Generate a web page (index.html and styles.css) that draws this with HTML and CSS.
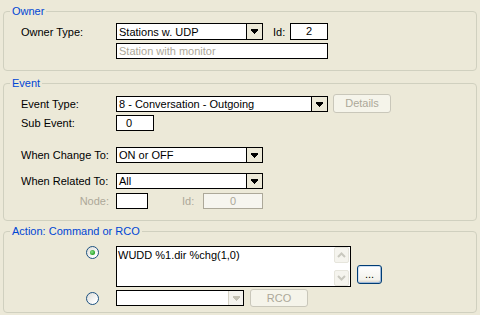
FILE: index.html
```html
<!DOCTYPE html>
<html lang="en">
<head>
    <meta charset="UTF-8">
    <title>Event Action</title>
    <link rel="stylesheet" href="styles.css">
</head>
<body>
    <fieldset class="group owner">
        <legend>Owner</legend>
        <div class="row">
            <span class="lbl">Owner Type:</span>
            <div class="combo tall w147">
                <span class="val">Stations w. UDP</span>
                <span class="arrow"><svg width="7" height="5" viewBox="0 0 7 5"><path d="M0 0h7v2H0z M1 2h5v1H1z M2 3h3v1H2z M3 4h1v1H3z"/></svg></span>
            </div>
            <span class="id-lbl">Id:</span>
            <div class="field tall owner-id">2</div>
        </div>
        <div class="row gap3">
            <span class="lbl"></span>
            <div class="field ghost w212">Station with monitor</div>
        </div>
    </fieldset>

    <fieldset class="group event">
        <legend>Event</legend>
        <div class="row top">
            <span class="lbl lbl-mid">Event Type:</span>
            <div class="combo w212 mt2">
                <span class="val">8 - Conversation - Outgoing</span>
                <span class="arrow"><svg width="7" height="5" viewBox="0 0 7 5"><path d="M0 0h7v2H0z M1 2h5v1H1z M2 3h3v1H2z M3 4h1v1H3z"/></svg></span>
            </div>
            <div class="btn off details">Details</div>
        </div>
        <div class="row gap2">
            <span class="lbl">Sub Event:</span>
            <div class="field sub">0</div>
        </div>
        <div class="row gap16">
            <span class="lbl">When Change To:</span>
            <div class="combo w147">
                <span class="val">ON or OFF</span>
                <span class="arrow"><svg width="7" height="5" viewBox="0 0 7 5"><path d="M0 0h7v2H0z M1 2h5v1H1z M2 3h3v1H2z M3 4h1v1H3z"/></svg></span>
            </div>
        </div>
        <div class="row gap10">
            <span class="lbl">When Related To:</span>
            <div class="combo w147">
                <span class="val">All</span>
                <span class="arrow"><svg width="7" height="5" viewBox="0 0 7 5"><path d="M0 0h7v2H0z M1 2h5v1H1z M2 3h3v1H2z M3 4h1v1H3z"/></svg></span>
            </div>
        </div>
        <div class="row gap4">
            <span class="lbl right dim">Node:</span>
            <div class="field node"></div>
            <span class="id-lbl dim node-id-lbl">Id:</span>
            <div class="field off node-id">0</div>
        </div>
    </fieldset>

    <fieldset class="group action">
        <legend>Action: Command or RCO</legend>
        <div class="row top">
            <span class="lbl"><span class="radio checked"></span></span>
            <div class="memo">
                <div class="memo-text">WUDD %1.dir %chg(1,0)</div>
                <div class="scroll">
                    <span class="sbtn"><svg width="9" height="6" viewBox="0 0 9 6"><path d="M1 5 4.5 1.5 8 5" fill="none" stroke="#c9c8bf" stroke-width="2"/></svg></span>
                    <span class="sbtn"><svg width="9" height="6" viewBox="0 0 9 6"><path d="M1 1 4.5 4.5 8 1" fill="none" stroke="#c9c8bf" stroke-width="2"/></svg></span>
                </div>
            </div>
            <div class="btn dots">...</div>
        </div>
        <div class="row gap2">
            <span class="lbl"><span class="radio"></span></span>
            <div class="combo w128 disabled">
                <span class="val"></span>
                <span class="arrow"><svg width="7" height="5" viewBox="0 0 7 5"><path d="M0 0h7v2H0z M1 2h5v1H1z M2 3h3v1H2z M3 4h1v1H3z" fill="#c4c1b4"/></svg></span>
            </div>
            <div class="btn off rco">RCO</div>
        </div>
    </fieldset>
</body>
</html>
```

FILE: styles.css
```css
body {
    margin: 0;
    padding: 5px 3px 0 3px;
    background: #ece9d8;
    font-family: 'Liberation Sans', Arial, sans-serif;
    font-size: 11px;
    line-height: 14px;
    color: #000;
}

.group {
    margin: 0;
    border: 1px solid #d0d0bf;
    border-radius: 4px;
    padding: 0 0 11px 6px;
    min-width: 0;
}

.group legend {
    padding: 0 2px;
    color: #0046d5;
    line-height: 13px;
}

.owner { padding-top: 5px; }
.event { margin-top: 6px; padding-top: 4px; }
.action { margin-top: 4px; padding-top: 8px; padding-bottom: 5px; }

.row {
    display: flex;
    align-items: center;
    padding-left: 11px;
}

.row.top { align-items: flex-start; }

.gap2 { margin-top: 2px; }
.gap3 { margin-top: 3px; }
.gap4 { margin-top: 4px; }
.gap10 { margin-top: 10px; }
.gap16 { margin-top: 16px; }
.mt2 { margin-top: 2px; }

.lbl {
    width: 95px;
    flex: none;
    display: flex;
    align-items: center;
}

.lbl-mid { height: 19px; }

.lbl.right {
    justify-content: flex-end;
    padding-right: 7px;
    box-sizing: border-box;
}

.dim { color: #aca899; }

/* combo boxes */
.combo {
    display: flex;
    height: 16px;
    border: 1px solid #000;
    background: #fff;
    box-sizing: border-box;
}

.combo.tall, .field.tall { height: 17px; }

.combo .val {
    flex: 1;
    padding-left: 2px;
    white-space: nowrap;
    overflow: hidden;
    display: flex;
    align-items: center;
}

.combo .arrow {
    width: 16px;
    flex: none;
    border-left: 1px solid #000;
    box-sizing: border-box;
    background: #ece9d8;
    display: flex;
    align-items: center;
    justify-content: center;
}

.combo.disabled .arrow {
    border-left-color: #d6d3c6;
    background: #f4f3ee;
    width: 15px;
}

.w147 { width: 147px; }
.w212 { width: 212px; }
.w128 { width: 128px; }

/* text fields */
.field {
    height: 16px;
    border: 1px solid #000;
    background: #fff;
    box-sizing: border-box;
    line-height: 14px;
    padding-left: 2px;
}

.field.ghost { color: #aca899; }

.field.off {
    border-color: #aca899;
    background: #f6f5ef;
    color: #aca899;
}

.owner-id {
    width: 38px;
    padding: 0;
    text-align: center;
}

.sub {
    width: 38px;
    padding-left: 9px;
}

.node { width: 32px; }

.node-id {
    width: 60px;
    padding: 0;
    text-align: center;
}

.id-lbl {
    margin-left: 10px;
    width: 17px;
}

.node-id-lbl {
    margin-left: 34px;
    width: 21px;
}

/* buttons */
.btn {
    height: 19px;
    border: 1px solid #003c74;
    border-radius: 3px;
    box-sizing: border-box;
    text-align: center;
    line-height: 17px;
    background: linear-gradient(#ffffff, #f3f2ec 80%, #d6d0c5);
}

.btn.off {
    border-color: #c9c7ba;
    background: #f5f4ea;
    color: #aca899;
}

.details {
    width: 58px;
    margin-left: 5px;
}

.rco {
    width: 58px;
    height: 18px;
    line-height: 16px;
    margin-left: 6px;
}

.dots {
    width: 25px;
    margin-left: 6px;
    align-self: flex-end;
    margin-bottom: 3px;
    box-shadow: inset -1px -1px 0 #9db8d8, inset 1px 1px 0 #cfe0f3;
}

/* radio buttons */
.radio {
    width: 13px;
    height: 13px;
    margin-left: 65px;
    border: 1px solid #1c5180;
    border-radius: 50%;
    box-sizing: border-box;
    background: linear-gradient(135deg, #dcdcd7, #ffffff 80%);
    display: flex;
    align-items: center;
    justify-content: center;
}

.radio.checked::after {
    content: "";
    width: 5px;
    height: 5px;
    border-radius: 50%;
    background: radial-gradient(circle at 40% 40%, #8ee28e, #21a121 70%);
}

/* memo with scroll bar */
.memo {
    width: 235px;
    height: 41px;
    border: 1px solid #000;
    background: #fff;
    box-sizing: border-box;
    display: flex;
}

.memo-text {
    flex: 1;
    padding: 1px 0 0 1px;
}

.scroll {
    width: 15px;
    padding-right: 1px;
    display: flex;
    flex-direction: column;
    justify-content: space-between;
}

.sbtn {
    height: 16px;
    border: 1px solid #e6e5dc;
    border-radius: 2px;
    box-sizing: border-box;
    background: #f5f4ee;
    display: flex;
    align-items: center;
    justify-content: center;
}
```
